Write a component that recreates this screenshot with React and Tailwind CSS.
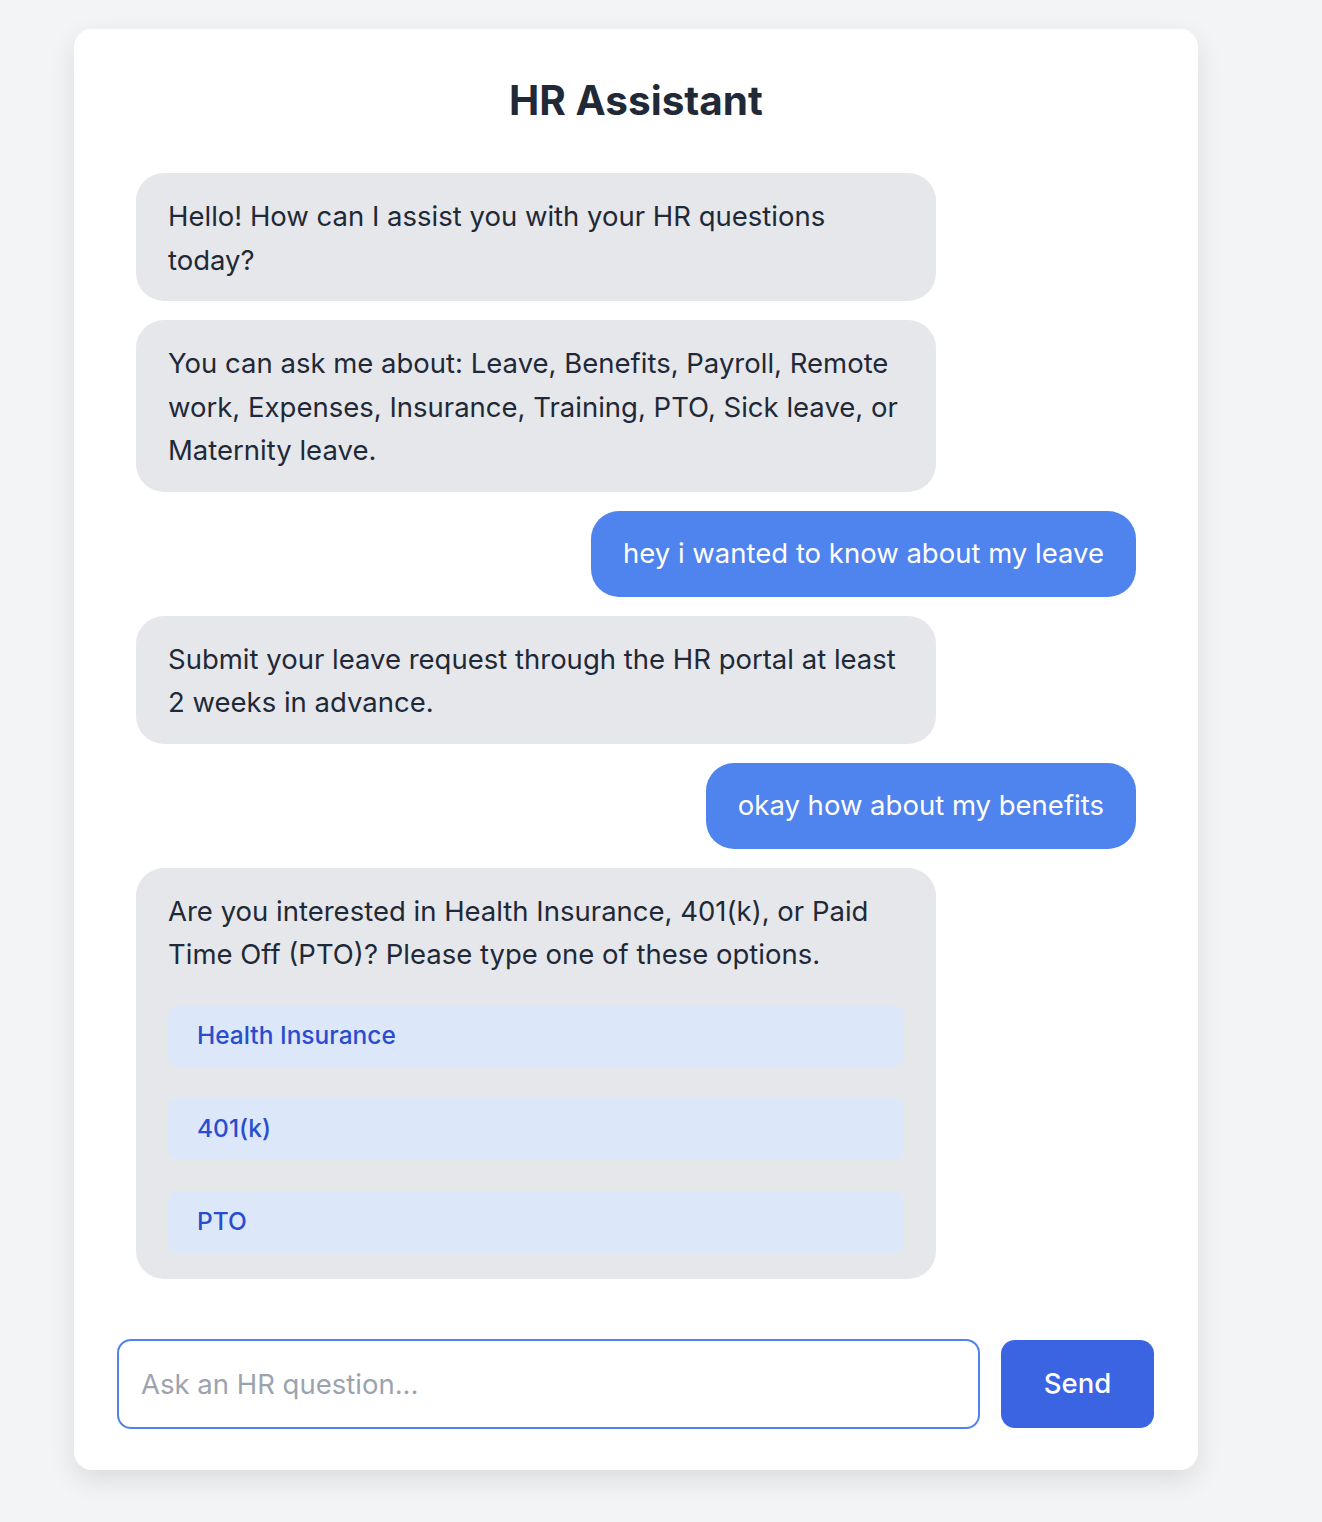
import { useState } from "react";

const messages = [
  { from: "bot", text: "Hello! How can I assist you with your HR questions today?" },
  {
    from: "bot",
    text: "You can ask me about: Leave, Benefits, Payroll, Remote work, Expenses, Insurance, Training, PTO, Sick leave, or Maternity leave.",
  },
  { from: "user", text: "hey i wanted to know about my leave" },
  { from: "bot", text: "Submit your leave request through the HR portal at least 2 weeks in advance." },
  { from: "user", text: "okay how about my benefits" },
  {
    from: "bot",
    text: "Are you interested in Health Insurance, 401(k), or Paid Time Off (PTO)? Please type one of these options.",
    options: ["Health Insurance", "401(k)", "PTO"],
  },
];

const App = () => {
  const [input, setInput] = useState("");

  return (
    <div className="min-h-screen bg-[#f3f4f6] pt-[29px] pb-[54px] font-['Inter',sans-serif]">
      <div className="ml-[74px] w-[1124px] bg-white rounded-[18px] shadow-[0_10px_28px_rgba(0,0,0,0.10)] pl-[43px] pr-[44px] pt-[43px] pb-[41px]">
        {/* Header */}
        <h1 className="text-center text-[40.5px] leading-[58px] font-bold text-[#1f2937] pl-px">
          HR Assistant
        </h1>

        {/* Messages */}
        <div className="flex flex-col gap-[19.3px] pl-[19px] pr-[18px] mt-[43px]">
          {messages.map((m, i) =>
            m.from === "bot" ? (
              <div key={i} className="flex justify-start">
                <div className="w-[800px] bg-[#e5e7eb] text-[#1f2937] rounded-[28px] px-8 pt-[22px] pb-[19px] text-[27.5px] leading-[43.5px]">
                  <p>{m.text}</p>
                  {m.options && (
                    <div className="flex flex-col gap-[31px] mt-[28px] mb-[7px]">
                      {m.options.map((opt) => (
                        <button
                          key={opt}
                          className="h-[62px] w-full flex items-center px-[29px] rounded-[12px] bg-[#dce7fa] text-[#2a4dd0] text-[24.5px] font-medium text-left"
                        >
                          {opt}
                        </button>
                      ))}
                    </div>
                  )}
                </div>
              </div>
            ) : (
              <div key={i} className="flex justify-end">
                <div className="bg-[#4f83ee] text-white rounded-[28px] px-8 py-[21px] text-[27.5px] leading-[43.5px]">
                  {m.text}
                </div>
              </div>
            )
          )}
        </div>

        {/* Input */}
        <div className="flex items-center gap-[21px] mt-[60px]">
          <input
            value={input}
            onChange={(e) => setInput(e.target.value)}
            placeholder="Ask an HR question..."
            className="flex-1 h-[90px] rounded-[14px] border-2 border-[#5083ec] px-[22px] text-[27.5px] text-[#1f2937] placeholder:text-[#9ca3af] outline-none"
          />
          <button className="w-[153px] h-[88px] rounded-[14px] bg-[#3a64e2] text-white text-[27.5px] font-medium">
            Send
          </button>
        </div>
      </div>
    </div>
  );
};

export default App;
